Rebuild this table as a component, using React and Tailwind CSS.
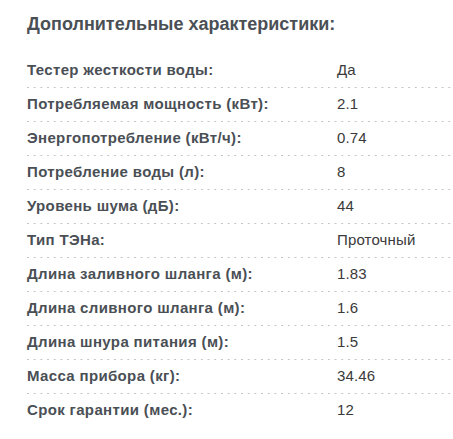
import React from 'react';

const specs = [
  ['Тестер жесткости воды:', 'Да'],
  ['Потребляемая мощность (кВт):', '2.1'],
  ['Энергопотребление (кВт/ч):', '0.74'],
  ['Потребление воды (л):', '8'],
  ['Уровень шума (дБ):', '44'],
  ['Тип ТЭНа:', 'Проточный'],
  ['Длина заливного шланга (м):', '1.83'],
  ['Длина сливного шланга (м):', '1.6'],
  ['Длина шнура питания (м):', '1.5'],
  ['Масса прибора (кг):', '34.46'],
  ['Срок гарантии (мес.):', '12'],
];

function SpecRow({ label, value, last }) {
  return (
    <div>
      <div className="flex items-center h-[33px] text-[15px]">
        <div className="w-[310px] font-bold text-[#4a4f55] tracking-[0.35px]">{label}</div>
        <div className="text-[#3a3a3a] tracking-[0.15px]">{value}</div>
      </div>
      {!last && (
        <div className="h-px bg-[linear-gradient(to_right,#c4c4c4_2px,transparent_2px)] bg-[length:6.7px_1px]" />
      )}
    </div>
  );
}

export default function App() {
  return (
    <div className="w-[453px] h-[439px] bg-white pl-[27px] pt-[12px] [font-family:'Liberation_Sans',Arial,sans-serif] overflow-hidden">
      <h2 className="text-[18px] font-bold text-[#4a4f55] leading-[24px]">
        Дополнительные характеристики:
      </h2>
      <div className="mt-[18px]">
        {specs.map(([label, value], i) => (
          <SpecRow key={label} label={label} value={value} last={i === specs.length - 1} />
        ))}
      </div>
    </div>
  );
}
